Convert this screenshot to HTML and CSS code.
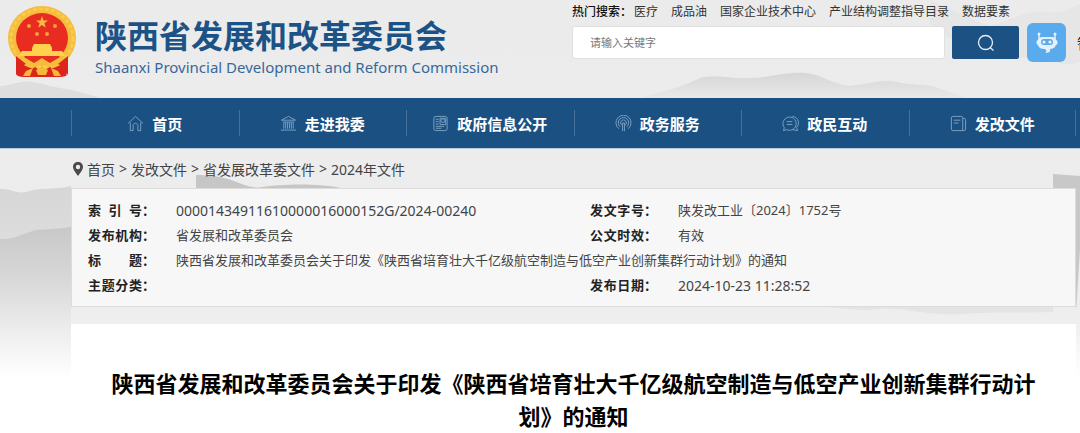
FILE: index.html
```html
<!DOCTYPE html>
<html lang="zh-CN">
<head>
    <meta charset="UTF-8">
    <meta name="viewport" content="width=device-width, initial-scale=1.0">
    <title>陕西省发展和改革委员会</title>
    <link rel="stylesheet" href="styles.css">
</head>
<body>

<!-- Ink mountains behind the page -->
<svg class="mountains" viewBox="0 0 1080 433" preserveAspectRatio="xMinYMin slice" aria-hidden="true">
    <defs>
        <linearGradient id="far" x1="0" y1="0" x2="0" y2="1">
            <stop offset="0" stop-color="#d6d6d6"/>
            <stop offset="1" stop-color="#e8e8e8"/>
        </linearGradient>
        <linearGradient id="near" x1="0" y1="0" x2="0" y2="1">
            <stop offset="0" stop-color="#c8c8c8"/>
            <stop offset="0.35" stop-color="#d8d8d8"/>
            <stop offset="0.65" stop-color="#ebebeb"/>
            <stop offset="1" stop-color="#ffffff"/>
        </linearGradient>
    </defs>
    <path d="M0 86C12 86 20 80 32 82C46 84 54 88 68 89C80 92 92 95 100 98H0Z" fill="#dedede"/>
    <path d="M640 98C662 92 680 88 700 78C716 74 730 79 752 78C772 77 786 72 806 73C822 75 832 84 850 86C868 84 882 79 898 82C912 86 926 83 938 88C950 92 958 95 965 98Z" fill="url(#far)"/>
    <path d="M930 0C950 8 972 20 990 26C1012 20 1030 8 1048 12C1062 14 1070 8 1080 4V62C1060 70 1040 54 1016 58C990 62 960 40 930 30Z" fill="#e6e6e6"/>
    <path d="M0 189C10 188 16 194 26 192C40 187 56 190 71 186V330H0Z" fill="url(#far)"/>
    <path d="M0 239C12 240 22 234 36 230C48 229 56 229 71 227V378H0Z" fill="url(#near)"/>
    <path d="M196 175C210 175 224 177 234 181C244 185 254 189 262 187C284 184 320 183 345 189H196Z" fill="#c6c6c6"/>
    <path d="M1053 174L1080 176V250C1078 280 1077 300 1076 310V188H1053Z" fill="#c8c8c8"/>
    <path d="M820 307C840 307 860 312 880 309C900 307 930 316 960 314C990 312 1020 313 1053 312V307Z" fill="#e4e4e4"/>
</svg>

<!-- Header -->
<header class="header">
    <a class="logo" href="#">
        <svg class="emblem" viewBox="0 0 68 72" aria-hidden="true">
            <path d="M9 50L34 56L59 50V66C59 70 55 71 48 70H20C12 71 8 70 8 66Z" fill="#dc251c"/>
            <ellipse cx="34" cy="32" rx="34" ry="32" fill="#f4bd3d"/>
            <ellipse cx="34" cy="32" rx="31" ry="29" fill="none" stroke="#fbcb4b" stroke-width="3" stroke-dasharray="4 2"/>
            <ellipse cx="34" cy="32" rx="26" ry="25" fill="#e92c20"/>
            <path d="M34 10l1.500 4.500h4.500l-3.600 2.800 1.400 4.500-3.800-2.700-3.800 2.700 1.400-4.500-3.600-2.800h4.500z" fill="#f8b946"/>
            <g fill="#f4a13d">
                <circle cx="21" cy="20" r="2"/>
                <circle cx="47" cy="20" r="2"/>
                <circle cx="29" cy="28" r="2"/>
                <circle cx="39" cy="28" r="2"/>
            </g>
            <path d="M26 38H42L44 42H24ZM24 42H44V46H24ZM14 45H54L57 50H11Z" fill="#ffd14c"/>
            <path d="M10 50C20 55 27 53 31 54L34 52L37 54C43 53 50 54 58 50L50 59L42 61L34 58L26 61L18 59Z" fill="#f6bc3c"/>
            <path d="M16 51H26L31 54L26 57ZM52 51H42L37 54L42 57Z" fill="#e92c20"/>
            <path d="M8 50L18 58L11 61L9 69L18 67L27 61L31 64L34 61L37 64L42 61L50 67L59 69L57 61L50 58L60 50V67C60 71 53 71 48 71H20C14 71 8 71 8 67Z" fill="#dc251c"/>
            <path d="M28 64L34 61L40 64L38 69H30ZM18 65L25 62L22 70H15ZM50 65L43 62L46 70H53Z" fill="#f6b83b"/>
        </svg>
        <span class="logo-text">
            <strong>陕西省发展和改革委员会</strong>
            <span lang="en">Shaanxi Provincial Development and Reform Commission</span>
        </span>
    </a>

    <div class="search-area">
        <div class="hot-words">
            <b>热门搜索：</b>
            <a href="#">医疗</a>
            <a href="#">成品油</a>
            <a href="#">国家企业技术中心</a>
            <a href="#">产业结构调整指导目录</a>
            <a href="#">数据要素</a>
        </div>
        <form class="search-form">
            <input type="text" aria-label="搜索" placeholder="请输入关键字">
            <button class="search-btn" type="button" aria-label="搜索">
                <svg width="18" height="18" viewBox="0 0 18 18" fill="none" stroke="#e6eef6" stroke-width="1.300">
                    <circle cx="8.500" cy="8.500" r="7"/>
                    <path d="M13 13.500L16.500 16.500"/>
                </svg>
            </button>
            <button class="robot-btn" type="button" aria-label="智能问答">
                <svg width="22" height="22" viewBox="0 0 22 22">
                    <path d="M3 2V7M19 2V7" stroke="#e4f1fd" stroke-width="1.500"/>
                    <circle cx="3" cy="2" r="1.500" fill="#e4f1fd"/>
                    <circle cx="19" cy="2" r="1.500" fill="#e4f1fd"/>
                    <path d="M6 5H16C19 5 20 7 20 8C22 8 22 13 20 13C19 16 16 17 14 17C15 20 12 21 9 21C11 20 11 19 9 17C5 17 3 16 2 13C0 13 0 8 2 8C2 7 4 5 6 5Z" fill="#e4f1fd"/>
                    <rect x="5" y="7" width="12" height="6" rx="3" fill="#5aa9ec"/>
                    <circle cx="8" cy="10" r="1.600" fill="#e4f1fd"/>
                    <circle cx="14" cy="10" r="1.600" fill="#e4f1fd"/>
                </svg>
            </button>
            <span class="robot-label">智</span>
        </form>
    </div>
</header>

<!-- Navigation Bar -->
<nav class="nav-bar">
    <a href="#">
        <svg viewBox="0 0 18 18"><path d="M1 9L9 1.500L17 9M3.500 8V16.500H6.500V11C6.500 8 11.500 8 11.500 11V16.500H14.500V8"/></svg>
        首页
    </a>
    <a href="#">
        <svg viewBox="0 0 18 18"><path d="M1.500 5.500L9 1.500L16.500 5.500ZM3 7.500H15M4 8V14.500M6 8V14.500M8 8V14.500M10 8V14.500M12 8V14.500M14 8V14.500M1 16H17"/></svg>
        走进我委
    </a>
    <a href="#">
        <svg viewBox="0 0 18 18"><rect x="2" y="1.500" width="14" height="15" rx="2"/><path d="M4 4.500H7M4 7H7M4 9.500H7M4 12H13M4 14H10"/><circle cx="11.500" cy="6" r="2"/><path d="M8.500 10V3.500H14.500V10Z"/></svg>
        政府信息公开
    </a>
    <a href="#">
        <svg viewBox="0 0 18 18"><path d="M4 14.500A8 8 0 1 1 14 14.500M5.500 12.500A5.500 5.500 0 1 1 12.500 12.500M7 10.500A3 3 0 1 1 11 10.500M8 17V8.500H10V17"/></svg>
        政务服务
    </a>
    <a href="#">
        <svg viewBox="0 0 18 18"><path d="M2.500 13.500A7 7 0 1 1 5 15.500L1.500 16.500ZM5 7H11M5 10H11M11 1.500C18 2 19 10 15.500 13L16.500 16.500L11 15.500"/></svg>
        政民互动
    </a>
    <a href="#">
        <svg viewBox="0 0 18 18"><rect x="1.500" y="1.500" width="12" height="15" rx="1.500"/><path d="M4 5.500H11M4 8.500H9M13.500 3.500H15C16 3.500 16.500 4 16.500 5V15C16.500 16 16 16.500 15 16.500H12"/></svg>
        发改文件
    </a>
</nav>

<main class="content">
    <!-- Breadcrumb -->
    <div class="breadcrumb">
        <svg width="10" height="14" viewBox="0 0 10 14"><path d="M5 0C8 0 10 2 10 5C10 8 7 11 5 14C3 11 0 8 0 5C0 2 2 0 5 0ZM5 2.800A2.200 2.200 0 1 0 5 7.200A2.200 2.200 0 1 0 5 2.800Z" fill="#4a4a4a"/></svg>
        <a href="#">首页</a>
        <span>&gt;</span>
        <a href="#">发改文件</a>
        <span>&gt;</span>
        <a href="#">省发展改革委文件</a>
        <span>&gt;</span>
        <a href="#">2024年文件</a>
    </div>

    <!-- Document Info -->
    <div class="info-box">
        <table>
            <colgroup>
                <col class="col-label">
                <col class="col-value">
                <col class="col-label">
                <col>
            </colgroup>
            <tr>
                <th><span>索引号</span>：</th>
                <td class="num">00001434911610000016000152G/2024-00240</td>
                <th><span>发文字号</span>：</th>
                <td>陕发改工业〔2024〕1752号</td>
            </tr>
            <tr>
                <th><span>发布机构</span>：</th>
                <td>省发展和改革委员会</td>
                <th><span>公文时效</span>：</th>
                <td>有效</td>
            </tr>
            <tr>
                <th><span>标题</span>：</th>
                <td colspan="3">陕西省发展和改革委员会关于印发《陕西省培育壮大千亿级航空制造与低空产业创新集群行动计划》的通知</td>
            </tr>
            <tr>
                <th><span>主题分类</span>：</th>
                <td></td>
                <th><span>发布日期</span>：</th>
                <td class="num">2024-10-23 11:28:52</td>
            </tr>
        </table>
    </div>

    <!-- Article -->
    <article class="article">
        <h1>陕西省发展和改革委员会关于印发《陕西省培育壮大千亿级航空制造与低空产业创新集群行动计划》的通知</h1>
    </article>
</main>

</body>
</html>
```
FILE: styles.css
```css
/* Global Styles */
* {
    box-sizing: border-box;
}

body {
    margin: 0;
    font-family: "Noto Sans", "Noto Sans CJK SC", sans-serif;
    font-size: 13px;
    color: #444;
    background: #fff linear-gradient(#ebebeb, #eeeeee 320px, #ffffff 376px) no-repeat;
    overflow-x: hidden;
}

a {
    color: inherit;
    text-decoration: none;
}

.mountains {
    position: absolute;
    top: 0;
    left: 0;
    width: 100%;
    z-index: -1;
}

/* Header */
.header {
    display: flex;
    justify-content: space-between;
    height: 98px;
    padding-left: 8px;
}

.logo {
    display: flex;
    gap: 19px;
    padding-top: 6px;
    color: #1c5387;
}

.emblem {
    width: 68px;
    height: 72px;
}

.logo-text {
    display: flex;
    flex-direction: column;
    padding-top: 11px;
    white-space: nowrap;
}

.logo-text strong {
    font-size: 32px;
    line-height: 38px;
}

.logo-text span {
    font-size: 15px;
    line-height: 24px;
    color: #37689a;
}

/* Search */
.search-area {
    flex: 0 0 508px;
    min-width: 0;
    padding-top: 3px;
}

.hot-words {
    display: flex;
    gap: 13px;
    font-size: 12px;
    line-height: 18px;
    color: #333;
    white-space: nowrap;
}

.hot-words b {
    font-weight: 500;
    margin-right: -11px;
    color: #111;
}

.search-form {
    display: flex;
    align-items: center;
    height: 39px;
    margin-top: 2px;
}

.search-form input {
    flex: 0 0 373px;
    height: 33px;
    padding: 0 17px;
    border: 1px solid #e0e0e0;
    border-radius: 3px;
    background: #fff;
    font-family: inherit;
    font-size: 11px;
}

.search-form input::placeholder {
    color: #777;
}

.search-form button {
    display: flex;
    align-items: center;
    justify-content: center;
    flex-shrink: 0;
    padding: 0;
    border: none;
    cursor: pointer;
}

.search-form .search-btn {
    width: 67px;
    height: 33px;
    margin-left: 7px;
    border-radius: 2px;
    background: #1b5283;
}

.search-form .robot-btn {
    width: 39px;
    height: 39px;
    margin-left: 8px;
    border-radius: 6px;
    background: #5aaaee;
}

.robot-label {
    flex-shrink: 0;
    margin-left: 11px;
    font-size: 14px;
    color: #222;
}

/* Navigation Bar */
.nav-bar {
    display: flex;
    height: 51px;
    padding: 0 4px 0 71px;
    background: #1b5182;
    border-bottom: 1px solid #b9cbdc;
}

.nav-bar a {
    position: relative;
    flex: 1;
    display: flex;
    align-items: center;
    justify-content: center;
    gap: 8px;
    font-size: 15px;
    font-weight: bold;
    color: #fff;
    white-space: nowrap;
}

.nav-bar a::before,
.nav-bar a:last-child::after {
    content: "";
    position: absolute;
    top: 12px;
    bottom: 12px;
    left: 0;
    width: 1px;
    background: #44729b;
}

.nav-bar a:last-child::after {
    left: auto;
    right: 0;
}

.nav-bar svg {
    width: 17px;
    height: 17px;
    fill: none;
    stroke: #7da2c4;
    stroke-width: 1;
}

/* Content */
.content {
    padding: 0 4px 0 71px;
}

.breadcrumb {
    display: flex;
    align-items: center;
    gap: 4px;
    height: 39px;
    padding-left: 2px;
    font-size: 14px;
}

/* Document Info */
.info-box {
    padding: 9px 16px 8px;
    border: 1px solid #dcdcdc;
    background: #f7f7f7;
}

.info-box table {
    width: 100%;
    table-layout: fixed;
    border-collapse: collapse;
}

.info-box th,
.info-box td {
    height: 25px;
    padding: 0;
    line-height: 25px;
    text-align: left;
    white-space: nowrap;
}

.info-box th {
    color: #222;
}

.info-box th span {
    display: inline-block;
    width: 54px;
    text-align-last: justify;
    vertical-align: top;
}

.info-box .num {
    font-size: 14px;
}

.col-label {
    width: 88px;
}

.col-value {
    width: 414px;
}

/* Article */
.article {
    margin-top: 17px;
    padding: 43px 40px 0;
    background: #fff;
}

.article h1 {
    margin: 0;
    font-size: 22px;
    line-height: 33px;
    text-align: center;
    color: #000;
}
```
